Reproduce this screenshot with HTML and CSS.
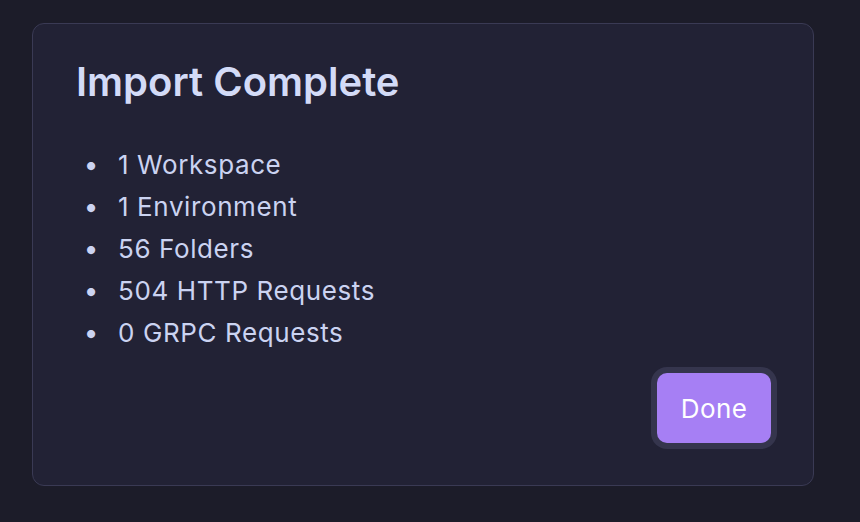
FILE: index.html
```html
<!DOCTYPE html>
<html lang="en">
<head>
    <meta charset="UTF-8">
    <meta name="viewport" content="width=device-width, initial-scale=1.0">
    <title>Import Complete</title>
    <link rel="stylesheet" href="styles.css">
</head>
<body>
<div class="dialog">
    <h1 class="dialog-title">Import Complete</h1>
    <ul class="summary">
        <li>1 Workspace</li>
        <li>1 Environment</li>
        <li>56 Folders</li>
        <li>504 HTTP Requests</li>
        <li>0 GRPC Requests</li>
    </ul>
    <div class="actions">
        <button type="button" class="btn-done">Done</button>
    </div>
</div>
</body>
</html>
```

FILE: styles.css
```css
body {
    margin: 0;
    padding: 23px 0 0 32px;
    background-color: #1c1c29;
    font-family: Inter, 'Noto Sans', Arial, sans-serif;
    color: #cdd5f3;
}
.dialog {
    box-sizing: border-box;
    width: 782px;
    height: 463px;
    padding: 34px 42px 42px 43px;
    background: #222235;
    border: 1px solid #3a3a54;
    border-radius: 12px;
    display: flex;
    flex-direction: column;
}
.dialog-title {
    margin: 0;
    font-size: 40px;
    line-height: 48px;
    font-weight: 600;
    color: #d3dbf7;
}
.summary {
    margin: 38px 0 0;
    padding-left: 42px;
    font-size: 26px;
    line-height: 42px;
    letter-spacing: 0.6px;
    color: #cbd3f1;
}
.summary li::marker {
    content: "\2022\2002\2009";
}
.actions {
    margin-top: auto;
    display: flex;
    justify-content: flex-end;
}
.btn-done {
    width: 114px;
    height: 70px;
    border: none;
    border-radius: 10px;
    background: #a67ff4;
    color: #ffffff;
    font-family: inherit;
    font-size: 26px;
    font-weight: 400;
    letter-spacing: 0.4px;
    box-shadow: 0 0 0 6px #35354d;
    cursor: pointer;
}
```
